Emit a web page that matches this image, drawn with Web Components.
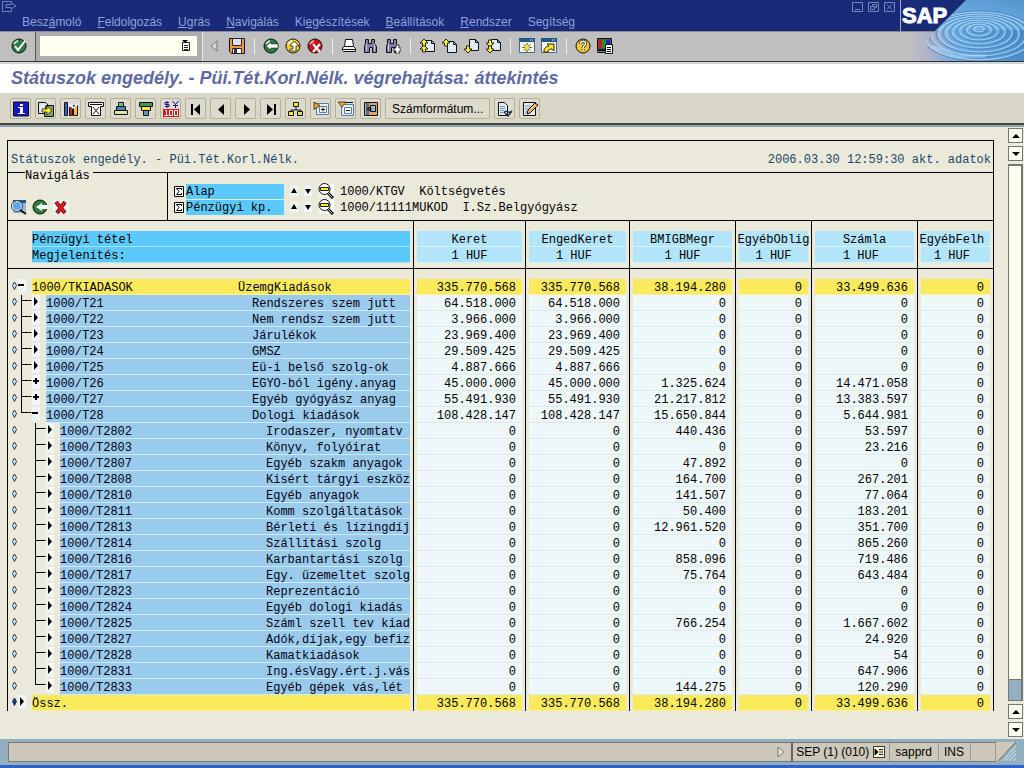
<!DOCTYPE html>
<html lang="hu">
<head>
<meta charset="utf-8">
<title>Státuszok engedély. - Püi.Tét.Korl.Nélk. végrehajtása: áttekintés</title>
<style>
body{margin:0;background:#ebe9da;font:12px/16px "Liberation Sans",Arial,sans-serif;color:#000}
</style>
</head>
<body>
<sap-window></sap-window>
<script>
const RESET = `*{box-sizing:border-box}button{font:inherit;color:inherit;background:none;border:0;padding:0;margin:0}`;

const circle = (c, d) => `<circle cx="8" cy="8" r="7" fill="${c}" stroke="#111" stroke-width="1"/><path d="M3 6a6 6 0 0 1 4-3" stroke="${d}" stroke-width="2" fill="none"/>`;
const page = (x, y) => `<path d="M${x} ${y}h6l3 3v8h-9z" fill="#dfeaf2" stroke="#111"/><path d="M${x + 6} ${y}v3h3" fill="none" stroke="#111"/>`;
const binoc = `<path d="M2.500 1.500h3v4h3v-4h3v4l2 3v6h-4v-5h-3v5h-5v-6l1-3z" fill="#7f7da4" stroke="#111"/><path d="M3.500 6v7M11.500 6v7" stroke="#c9c8e2" fill="none"/>`;
const upArrow = (x, y) => `<path d="M${x} ${y}l4 4h-2.500v3h-3v-3h-2.500z" fill="#ffee22" stroke="#222" stroke-width="1"/>`;
const downArrow = (x, y) => `<path d="M${x} ${y}l-4-4h2.500v-3h3v3h2.500z" fill="#ffee22" stroke="#222" stroke-width="1"/>`;
const win = `<path d="M0.500 0.500h15v14h-15z" fill="#f8f8ee" stroke="#456b8c"/><path d="M0 0h16v4h-16z" fill="#245886"/><path d="M11 2h1M13 2h1" stroke="#fff"/>`;
const ICONS = {
  ok: circle('#2c7a45', '#bfe0c0') + `<path d="M4 8l3 4 7-9" fill="none" stroke="#fff" stroke-width="2"/>`,
  save: `<path d="M.5 .5h15v15h-13l-2-2z" fill="#f09a3a" stroke="#111"/><path d="M3.500 .5h9v7h-9z" fill="#dfe2f4" stroke="#223"/><path d="M3.500 10.500h9v5h-9z" fill="#fff" stroke="#223"/><path d="M5 11h3v4h-3z" fill="#334"/>`,
  back: circle('#2c7a45', '#bfe0c0') + `<path d="M3 8l5-4v2h7v4h-7v2z" fill="#fff" stroke="#111" stroke-width=".5"/>`,
  exit: circle('#f5d21f', '#fffbd0') + `<path d="M9 3l5 5h-3v5h-6v-2h3v-3h-3z" fill="#fff" stroke="#222" stroke-width=".8"/>`,
  cancel: circle('#c8141c', '#f7a0a0') + `<path d="M6 6l7 8M13 6l-7 8" stroke="#fff" stroke-width="2"/>`,
  print: `<path d="M4.500 1.500h7l1 7h-9z" fill="#fff" stroke="#111"/><path d="M3.500 8.500h9l2 2v3h-12l-1-1v-3z" fill="#f6f4e4" stroke="#111"/><path d="M2 11.500h12" stroke="#111"/>`,
  find: binoc,
  findnext: binoc + `<path d="M11 7h3v3h2v3h-2v3h-3v-3h-2v-3h2z" fill="#fff" stroke="#111" stroke-width=".8"/>`,
  first: page(6.5, 2.5) + upArrow(5, 7) + upArrow(5, 1),
  prev: page(6.5, 3.500) + upArrow(5, 1),
  next: page(6.5, 1.500) + downArrow(5, 15),
  last: page(6.5, 1.500) + downArrow(5, 9) + downArrow(5, 15),
  newwin: win + `<path d="M3.500 9.500h9M8 5v9M5 6.500l6 6M11 6.500l-6 6" stroke="#333"/><path d="M8 7v5M5.500 9.500h5" stroke="#ffe81c" stroke-width="2"/>`,
  shortcut: win + `<path d="M3 14c0-4 1-5 5-6l-2-2h7v7l-2-2c-3 0-4 1-4 3z" fill="#ffe81c" stroke="#222"/>`,
  help: `<circle cx="8" cy="8" r="7" fill="#f7c92c" stroke="#111"/><path d="M5.500 6c0-4 5.500-3.500 5 0 0 2-2.500 1.500-2.500 4M8 11v2" fill="none" stroke="#222" stroke-width="3"/><path d="M5.500 6c0-4 5.500-3.500 5 0 0 2-2.500 1.500-2.500 4M8 11v2" fill="none" stroke="#fff" stroke-width="1.500"/>`,
  layout: `<path d="M.5 .5h14v11h-14z" fill="#555" stroke="#111"/><path d="M2 2h3v8h-3z" fill="#d11"/><path d="M5 2h4v8h-4z" fill="#1a9a2a"/><path d="M9 2h4v8h-4z" fill="#22c"/><path d="M.5 12.500h9v2h-9z" fill="#3a6" stroke="#111"/><path d="M8.500 6.500h7v9h-7z" fill="#fff" stroke="#111"/><path d="M10 9.500h4M10 11.500h4M10 13.500h4" stroke="#111"/>`,
  info: `<path d="M.5 1h15v14h-15z" fill="#1818c8" stroke="#111"/><path d="M7 3h3v2h-3zM5 6h5v6h2v1h-7v-1h2v-5h-2z" fill="#fff"/>`,
  export: `<path d="M.5 1.500h7l3 3v8h-10z" fill="#dfeaf2" stroke="#111"/><path d="M8 4.500h7.500v11h-9v-3z" fill="#78a070" stroke="#111"/><path d="M4 8h5v-3l5 4.500-5 4.500v-3h-5z" fill="#ffef25" stroke="#222" stroke-width=".8"/>`,
  chart: `<path d="M0 1h16v14h-16z" fill="#d8dde8"/><path d="M1.500 1.500h3v13h-3z" fill="#36c" stroke="#111"/><path d="M6.500 6.500h3v8h-3z" fill="#c22" stroke="#111"/><path d="M10.500 4.500h4v10h-4z" fill="#fb4" stroke="#111"/><path d="M6 3l4 4 5-4" stroke="#fff" fill="none" stroke-width="1.500"/>`,
  fold: `<path d="M.5 1.500h15v4h-3v9h-9v-9h-3z" fill="#fff" stroke="#111"/><path d="M2 3.500h12M5 6l6 7M11 6l-6 7" stroke="#111"/>`,
  sortup: `<path d="M5.500 1.500h5v4h-5z" fill="#79c28c" stroke="#111"/><path d="M3.500 5.500h9v4h-9z" fill="#4a83b8" stroke="#111"/><path d="M1.500 9.500h13v4h-13z" fill="#d3e8a0" stroke="#111"/>`,
  sortdown: `<path d="M1.500 1.500h13v4h-13z" fill="#4a9368" stroke="#111"/><path d="M3.500 5.500h9v4h-9z" fill="#ffe42c" stroke="#111"/><path d="M5.500 9.500h5v5h-5z" fill="#6292bf" stroke="#111"/>`,
  currency: `<path d="M6 1.500h-4v2h4v2h-4M4 0v7M9.500 0l3 3.500 3-3.500M12.500 3v4M10 4.500h5" fill="none" stroke="#14149c"/><path d="M0 8h16v8h-16z" fill="#d4181c"/><path d="M2 9.500h1.500v4.500M1.500 14.500h4M6.500 9.500h3v5h-3zM11.500 9.500h3v5h-3z" fill="none" stroke="#fff"/>`,
  gofirst: `<path d="M3 3h2v11h-2zM12 3v11l-6-5.500z" fill="#000"/>`,
  goprev: `<path d="M11 3v11l-6-5.500z" fill="#000"/>`,
  gonext: `<path d="M6 3v11l6-5.500z" fill="#000"/>`,
  golast: `<path d="M4 3v11l6-5.500zM11 3h2v11h-2z" fill="#000"/>`,
  org: `<path d="M8 5v4M3 12v-3h10v3" stroke="#111" fill="none"/><path d="M5.500 1.500h5v4h-5z" fill="#ffe81c" stroke="#111"/><path d="M.5 10.500h5v4h-5z" fill="#ffe81c" stroke="#111"/><path d="M9.500 10.500h5v4h-5z" fill="#d8d880" stroke="#111"/>`,
  expand: `<path d="M3.500 2.500h12v11h-12z" fill="#e9eff8" stroke="#557aa4"/><path d="M6.500 5.500h7v6h-7z" fill="#fff" stroke="#557aa4"/><path d="M8 8.500h4M10 6.500v4" stroke="#111"/><path d="M1 1l6 3.500-6 4z" fill="#f9a51c" stroke="#111" stroke-width=".7"/>`,
  collapse: `<path d="M3.500 3.500h12v11h-12z" fill="#e9eff8" stroke="#557aa4"/><path d="M6.500 6.500h7v6h-7z" fill="#fff" stroke="#557aa4"/><path d="M8 9.500h4M3 1.500h12" stroke="#111"/><path d="M0 1h8l-4 5z" fill="#f9a51c" stroke="#111" stroke-width=".7"/>`,
  drill: `<path d="M1.500 1.500h13v13h-13z" fill="#e2a35c" stroke="#111"/><path d="M3 2h3v12h-3z" fill="#4672a8"/><path d="M7.500 4.500h5v6h-5z" fill="#93b7dc" stroke="#111"/><path d="M4 8h5M7 6l-3 2 3 2" fill="none" stroke="#111"/>`,
  display: `<path d="M1.500 1.500h6l3 3v10h-9z" fill="#dfeaf2" stroke="#111"/><path d="M3 5.500h5M3 7.500h5M3 9.500h4M3 11.500h3" stroke="#7798ad"/><path d="M7 12c2-5 4 2 8-2M8 12l3 3 4-5" fill="none" stroke="#234" stroke-width="1.500"/>`,
  edit: `<path d="M1.500 1.500h12v13h-12z" fill="#dfeaf2" stroke="#111"/><path d="M3 5h6M3 8h4M3 11h3" stroke="#7798ad"/><path d="M5 13l1-4 7-7 3 2-8 8z" fill="#f3b65c" stroke="#111"/>`,
  detail: `<path d="M2 1h13v13h-13z" fill="#9cb8d8"/><path d="M2 1h13v3h-13z" fill="#245886"/><circle cx="6" cy="7" r="4.500" fill="#5ba6ea" stroke="#eef"/><circle cx="6" cy="7" r="5.500" fill="none" stroke="#445"/><path d="M9 11l6 4" stroke="#111" stroke-width="2"/>`,
  undo: `<circle cx="8" cy="8" r="7" fill="#2f7d3c" stroke="#111"/><path d="M4 8l6-4v2h6v4h-6v2z" fill="#fff"/>`,
  del: `<path d="M0 1h16v15h-16z" fill="#eef4f2"/><path d="M3 3l9 11M12 3l-8 11" stroke="#611" stroke-width="4"/><path d="M3 3l9 11M12 3l-8 11" stroke="#e01828" stroke-width="2.500"/>`,
  zoom: `<path d="M1 1h15v14h-15z" fill="#f6f8f4"/><circle cx="6.500" cy="6" r="5.500" fill="#fff" stroke="#111"/><path d="M2.500 4.500h8v3h-8z" fill="#fff01c" stroke="#222"/><path d="M10 10l5 5" stroke="#111" stroke-width="3"/><path d="M10 10l4 4" stroke="#bbb"/>`,
  sum: `<path d="M.5.5h9v10h-9z" fill="#fff" stroke="#000"/><path d="M7.500 4v-1.500h-5l2.500 3-2.500 3h5v-1.500" fill="none" stroke="#000"/>`,
  up: `<path d="M0 0h8v10h-8z" fill="#f1f6f5"/><path d="M4 2l3 5h-6z"/>`,
  down: `<path d="M0 0h8v10h-8z" fill="#f1f6f5"/><path d="M4 8l3-5h-6z"/>`,
  history: `<path d="M1.500 2.500h7v8h-7z" fill="#fff" stroke="#222"/><path d="M3 5.500h4M3 7.500h4M3 9.500h4" stroke="#222"/><path d="M1 0h6l-3 3z"/>`,
  menu: `<path d="M9.500 2.500v-2h-9v10h9v-2M4 3.500h5v-1.500l5 3-5 3v-1.500h-5z" fill="none" stroke="#6d80bd"/>`,
  min: `<path d="M.5.5h10v9h-10zM3 7.500h5" fill="none" stroke="#7487bf"/>`,
  restore: `<path d="M.5.5h10v9h-10zM4.500 4v-1.500h4v3h-2M2.500 4.500h4v3h-4z" fill="none" stroke="#7487bf"/>`,
  close: `<path d="M.5.5h10v9h-10zM3 2.500l5 5M8 2.500l-5 5" fill="none" stroke="#7487bf"/>`,
  tri: `<path d="M7 1v10l-6-5z" fill="#d8d8d8" stroke="#777"/>`,
  msg: `<path d="M1 1v10l6-5z" fill="#e7e4d4" stroke="#777"/>`,
  sys: `<path d="M.5.5h11v11h-11z" fill="#fffbd8" stroke="#333"/><path d="M2 3l3 3-3 3zM6 3.500h4M6 6h4M6 8.500h4" stroke="#111"/>`,
};
const SIZES = {sum:[10,11],up:[8,10],down:[8,10],history:[10,12],menu:[15,11],min:[11,10],restore:[11,10],close:[11,10],tri:[8,12],msg:[8,12],sys:[12,12]};

customElements.define('sap-icon', class extends HTMLElement {
  connectedCallback() {
    const n = this.getAttribute('name'), [w, h] = SIZES[n] || [16, 16];
    this.attachShadow({mode: 'open'}).innerHTML =
      `<style>:host{display:block;flex:none;width:${w}px;height:${h}px}svg{display:block}</style><svg width="${w}" height="${h}" viewBox="0 0 ${w} ${h}" aria-hidden="true">${ICONS[n]}</svg>`;
  }
});

customElements.define('icon-button', class extends HTMLElement {
  connectedCallback() {
    const n = this.getAttribute('name'), framed = this.hasAttribute('framed');
    this.attachShadow({mode: 'open'}).innerHTML = `<style>${RESET}
      :host{display:block;flex:none;white-space:normal}
      button{display:flex;align-items:center;justify-content:center}
      .framed{height:21px;min-width:21px;border:1px solid #b3b09c;border-radius:2px;background:#dddbcb;padding:0 1px}
      .framed:has(slot.text){padding:0 6px}</style>
      <button type="button" class="${framed ? 'framed' : ''}" ${n ? `aria-label="${n}"` : ''}>${n ? `<sap-icon name="${n}"></sap-icon>` : '<slot class="text"></slot>'}</button>`;
  }
});

customElements.define('menu-bar', class extends HTMLElement {
  connectedCallback() {
    const items = ['Besz<u>á</u>moló','<u>F</u>eldolgozás','<u>U</u>grás','<u>N</u>avigálás','Ki<u>e</u>gészítések','<u>B</u>eállítások','<u>R</u>endszer','Se<u>g</u>ítség'];
    this.attachShadow({mode: 'open'}).innerHTML = `<style>${RESET}
      :host{display:flex;justify-content:space-between;height:32px;background:#192a78;border-bottom:1px solid #8a8a90;color:#8fa2dc;padding:1px 5px 0 2px;box-sizing:border-box}
      nav{display:flex;gap:16px;padding:12px 0 0 5px}
      .left{display:flex}.ctl{display:flex;gap:5px;padding-top:1px}</style>
      <div class="left"><icon-button name="menu"></icon-button><nav>${items.map(i => `<button type="button">${i}</button>`).join('')}</nav></div>
      <div class="ctl"><icon-button name="min"></icon-button><icon-button name="restore"></icon-button><icon-button name="close"></icon-button></div>`;
  }
});

customElements.define('system-toolbar', class extends HTMLElement {
  connectedCallback() {
    const groups = [['save'],['back','exit','cancel'],['print','find','findnext'],['first','prev','next','last'],['newwin','shortcut'],['help','layout']];
    this.attachShadow({mode: 'open'}).innerHTML = `<style>${RESET}
      :host{display:flex;height:30px;background:#bfbfbf;border-bottom:1px solid #333;box-sizing:border-box}
      .ok{width:36px;padding:6px 0 0 11px;border-right:1px solid #555}
      .cmd{display:flex;flex:none;width:167px;padding:4px 5px 5px 4px;border-right:1px solid #e8e8e8;background:#adadad}
      .field{display:flex;align-items:center;flex:1;min-width:0;background:#fffff0;padding-right:6px}
      input{flex:1;min-width:0;width:100%;border:0;background:none;outline:0;font:inherit;height:19px}
      .tri{padding:8px 11px 0 7px}
      .groups{display:flex;padding-top:6px}
      .g{display:flex;gap:6px;padding:0 9px 0 8px;border-left:1px solid #eee;height:16px}
      .g:first-child{border:0;padding-left:0}</style>
      <div class="ok"><icon-button name="ok"></icon-button></div>
      <div class="cmd"><div class="field"><input type="text" aria-label="Parancsmező"><icon-button name="history"></icon-button></div></div>
      <div class="tri"><icon-button name="tri"></icon-button></div>
      <div class="groups">${groups.map(g => `<div class="g">${g.map(n => `<icon-button name="${n}"></icon-button>`).join('')}</div>`).join('')}</div>`;
  }
});

customElements.define('sap-logo', class extends HTMLElement {
  connectedCallback() {
    let rings = '';
    for (let i = 1; i < 9; i++) rings += `<ellipse cx="79" cy="${28 + i}" rx="${i * 7 - 2}" ry="${i * 3}" fill="none" stroke="#a9d8f8" stroke-width="1.500" opacity=".75"/><ellipse cx="79" cy="${28 + i}" rx="${i * 7 + 1}" ry="${i * 3 + 1}" fill="none" stroke="#3877b8" opacity=".6"/>`;
    this.attachShadow({mode: 'open'}).innerHTML = `<style>
      :host{display:block;flex:none;width:124px;height:62px}svg{display:block}
      text{font:bold 22px "Liberation Sans",Arial,sans-serif;fill:#fff;stroke:#fff;stroke-width:1px}</style>
      <svg width="124" height="62" viewBox="0 0 124 62">
      <defs><linearGradient id="w"><stop offset="0" stop-color="#bfbfbf"/><stop offset=".2" stop-color="#aab0cb"/><stop offset=".4" stop-color="#6caade"/><stop offset="1" stop-color="#4a8cc8"/></linearGradient>
      <linearGradient id="n" x1="0" y1="0" x2="0" y2="1"><stop offset="0" stop-color="#5b9cd2"/><stop offset="1" stop-color="#7dbcec"/></linearGradient>
      <clipPath id="c"><path d="M66 0h58v61H30l-4-20 10-10z"/></clipPath></defs>
      <path d="M0 0h124v61H0z" fill="#bfbfbf"/>
      <path d="M10 0h114v61H10z" fill="url(#w)"/>
      <path d="M66 0h58v30H36z" fill="url(#n)" opacity=".6"/>
      <g clip-path="url(#c)">${rings}<path d="M32 46l24 10h30" stroke="#c4edff" stroke-width="3" opacity=".4" fill="none"/></g>
      <path d="M0 0h66l-31 31H0z" fill="#192a78"/><path d="M0 31.500h35" stroke="#8a8a90"/>
      <path d="M.5 0v31" stroke="#aab"/>
      <text x="2" y="23">SAP</text>
      <path d="M0 61.500h124" stroke="#333"/></svg>`;
  }
});

customElements.define('app-toolbar', class extends HTMLElement {
  connectedCallback() {
    const a = ['info','export','chart','fold','sortup','sortdown','currency','gofirst','goprev','gonext','golast','org','expand','collapse','drill'];
    const b = n => `<icon-button framed name="${n}"></icon-button>`;
    this.attachShadow({mode: 'open'}).innerHTML = `<style>
      :host{display:flex;gap:4px;padding:4px 10px;height:33px;box-sizing:border-box;background:#d9d7c7;border-bottom:2px solid #8fa0ac;box-shadow:inset 0 -2px #444}</style>
      ${a.map(b).join('')}<icon-button framed>Számformátum...</icon-button>${['display','edit'].map(b).join('')}`;
  }
});

const COLS = [['Keret','1 HUF'],['EngedKeret','1 HUF '],['BMIGBMegr','1 HUF'],['EgyébOblig','1 HUF'],['Számla','1 HUF '],['EgyébFelh ','1 HUF ']];
const Z = '0';
const ROWS = [
 [0,'-','1000/TKIADASOK','ÜzemgKiadások','335.770.568','335.770.568','38.194.280',Z,'33.499.636',Z],
 [1,'>','1000/T21','Rendszeres szem jutt','64.518.000','64.518.000',Z,Z,Z,Z],
 [1,'>','1000/T22','Nem rendsz szem jutt','3.966.000','3.966.000',Z,Z,Z,Z],
 [1,'>','1000/T23','Járulékok','23.969.400','23.969.400',Z,Z,Z,Z],
 [1,'>','1000/T24','GMSZ','29.509.425','29.509.425',Z,Z,Z,Z],
 [1,'>','1000/T25','Eü-i belső szolg-ok','4.887.666','4.887.666',Z,Z,Z,Z],
 [1,'+','1000/T26','EGYO-ból igény.anyag','45.000.000','45.000.000','1.325.624',Z,'14.471.058',Z],
 [1,'+','1000/T27','Egyéb gyógyász anyag','55.491.930','55.491.930','21.217.812',Z,'13.383.597',Z],
 [1,'-','1000/T28','Dologi kiadások','108.428.147','108.428.147','15.650.844',Z,'5.644.981',Z],
 [2,'>','1000/T2802','Irodaszer, nyomtatv',Z,Z,'440.436',Z,'53.597',Z],
 [2,'>','1000/T2803','Könyv, folyóirat',Z,Z,Z,Z,'23.216',Z],
 [2,'>','1000/T2807','Egyéb szakm anyagok',Z,Z,'47.892',Z,Z,Z],
 [2,'>','1000/T2808','Kisért tárgyi eszköz',Z,Z,'164.700',Z,'267.201',Z],
 [2,'>','1000/T2810','Egyéb anyagok',Z,Z,'141.507',Z,'77.064',Z],
 [2,'>','1000/T2811','Komm szolgáltatások',Z,Z,'50.400',Z,'183.201',Z],
 [2,'>','1000/T2813','Bérleti és lízingdíj',Z,Z,'12.961.520',Z,'351.700',Z],
 [2,'>','1000/T2814','Szállítási szolg',Z,Z,Z,Z,'865.260',Z],
 [2,'>','1000/T2816','Karbantartási szolg',Z,Z,'858.096',Z,'719.486',Z],
 [2,'>','1000/T2817','Egy. üzemeltet szolg',Z,Z,'75.764',Z,'643.484',Z],
 [2,'>','1000/T2823','Reprezentáció',Z,Z,Z,Z,Z,Z],
 [2,'>','1000/T2824','Egyéb dologi kiadás',Z,Z,Z,Z,Z,Z],
 [2,'>','1000/T2825','Száml szell tev kiad',Z,Z,'766.254',Z,'1.667.602',Z],
 [2,'>','1000/T2827','Adók,díjak,egy befiz',Z,Z,Z,Z,'24.920',Z],
 [2,'>','1000/T2828','Kamatkiadások',Z,Z,Z,Z,'54',Z],
 [2,'>','1000/T2831','Ing.ésVagy.ért.j.vás',Z,Z,Z,Z,'647.906',Z],
 [2,'>','1000/T2833','Egyéb gépek vás,lét',Z,Z,'144.275',Z,'120.290',Z],
 [0,'>','Össz.','','335.770.568','335.770.568','38.194.280',Z,'33.499.636',Z],
];

function treeGlyph(level, mark, last, total) {
  const w = 24 + level * 14, m = 10 + level * 14;
  let s = `<path d="M6.500 3l2 3.500-2 4-2-4z" fill="${total ? '#123a70' : 'none'}" stroke="#123a70"/>`;
  if (level) s += `<path d="M${m - 10.5} 0V${last ? 6 : 16}M${m - 10.5} 5.500h10" fill="none" stroke="#000"/>`;
  s += `<path d="M${m} 0h8v14h-8z" fill="#eff7f8"/>`;
  if (mark === '>') s += `<path d="M${m + 2} 2v9l4-4.500z"/>`;
  if (mark === '+') s += `<path d="M${m + 1} 5h6v2h-6zM${m + 3} 3h2v6h-2z"/>`;
  if (mark === '-') s += `<path d="M${m} 5h6v2h-6z"/>`;
  return `<svg width="${w}" height="16" viewBox="0 0 ${w} 16" aria-hidden="true">${s}</svg>`;
}

customElements.define('report-grid', class extends HTMLElement {
  connectedCallback() {
    const body = ROWS.map((r, i) => {
      const [lv, mk, key, txt, ...v] = r, next = ROWS[i + 1];
      const last = lv > 0 && (!next || (lv === 1 ? next[0] !== 1 : next[0] < lv));
      return `<tr class="${lv ? '' : 'tot'}"><td><div class="node">${treeGlyph(lv, mk, last, i === ROWS.length - 1)}<div class="fill key"><span>${key}</span><span>${txt}</span></div></div></td>${v.map(x => `<td><div class="fill num">${x}</div></td>`).join('')}</tr>`;
    }).join('');
    const dim = (k, v) => `<div class="dim"><sap-icon name="sum"></sap-icon><span class="k">${k}</span><icon-button name="up"></icon-button><icon-button name="down"></icon-button><icon-button name="zoom"></icon-button><span class="v">${v}</span></div>`;
    this.attachShadow({mode: 'open'}).innerHTML = `<style>${RESET}
      :host{display:block;flex:1;min-width:0;font:12px/18px "Liberation Mono","Courier New",monospace;white-space:pre}
      .head{display:flex;justify-content:space-between;border:1px solid #000;padding:10px 2px 3px 3px;color:#24466a}
      .nav{display:flex;border:solid #000;border-width:0 1px 1px;height:48px}
      .acts{position:relative;display:flex;gap:5px;width:160px;border-right:1px solid #000;padding:26px 0 0 3px}
      .legend{position:absolute;left:17px;top:-4px;width:68px;line-height:14px;background:#ebe9da}
      .dims{padding:10px 0 0 6px}
      .dim{display:flex;align-items:center;height:16px}
      .dim .k{width:98px;height:15px;line-height:16px;background:#5cc9fd;margin:0 6px 0 2px}
      .dim .v{height:16px}
      .dim icon-button{margin-right:6px}
      table{width:100%;table-layout:fixed;border-spacing:0;border-left:1px solid #000}
      th,td{padding:0 3px;border-right:1px solid #000;font-weight:normal;text-align:left}
      th{padding:10px 3px 5px;border-bottom:1px solid #000}
      td:first-child{padding-left:0}th:first-child{padding-left:24px}
      th div{display:flex;justify-content:center;height:16px;background:#b2e5fb;border-bottom:1px solid #d6f2fc}
      th:first-child div{justify-content:flex-start;background:#5cc9fd;border-bottom-color:#a5e4fd}
      tbody tr:first-child td{padding-top:10px}
      .node{display:flex;height:16px}svg{display:block;flex:none}
      .fill{height:16px;background:#eef7fa;border-bottom:1px solid #dcebe9}
      .num{text-align:right;padding-right:6px}
      .key{display:flex;flex:1;min-width:0;background:#9bcbec;border-bottom-color:#cdeaf8;color:#001}
      .key span:first-child{flex:0 0 206px}
      .tot .fill{background:#fbeb5c;border-bottom-color:#fbf0a0}</style>
      <div class="head"><span>Státuszok engedély. - Püi.Tét.Korl.Nélk.</span><span>2006.03.30 12:59:30 akt. adatok</span></div>
      <div class="nav"><div class="acts"><span class="legend">Navigálás</span><icon-button name="detail"></icon-button><icon-button name="undo"></icon-button><icon-button name="del"></icon-button></div>
      <div class="dims">${dim('Alap', '1000/KTGV  Költségvetés')}${dim('Pénzügyi kp.', '1000/11111MUKOD  I.Sz.Belgyógyász')}</div></div>
      <table><colgroup><col>${[112,104,106,76,106,76].map(w => `<col style="width:${w}px">`).join('')}</colgroup>
      <thead><tr><th><div>Pénzügyi tétel</div><div>Megjelenítés:</div></th>${COLS.map(c => `<th><div>${c[0]}</div><div>${c[1]}</div></th>`).join('')}</tr></thead>
      <tbody>${body}</tbody></table>`.replace(/>\n\s+</g, '><');
  }
});

customElements.define('scroll-rail', class extends HTMLElement {
  connectedCallback() {
    const b = (d, l) => `<button type="button" aria-label="${l}"><svg width="8" height="4" viewBox="0 0 8 4"><path d="${d}"/></svg></button>`;
    const up = b('M0 4l4-4 4 4z', 'Fel'), dn = b('M0 0l4 4 4-4z', 'Le');
    this.attachShadow({mode: 'open'}).innerHTML = `<style>${RESET}
      :host{display:flex;flex-direction:column;gap:3px;width:15px;flex:none}
      button{height:15px;display:flex;align-items:center;justify-content:center;background:#fbfbf0;border:1px solid #777}
      .track{flex:1;display:flex;flex-direction:column;justify-content:flex-end;background:#fffff0;border:2px solid #777;border-width:2px 2px 1px 1px}
      .thumb{height:21px;background:#92afc4;border-top:1px solid #777}</style>
      ${up}${dn}<div class="track"><div class="thumb"></div></div>${up}${dn}`;
  }
});

customElements.define('status-bar', class extends HTMLElement {
  connectedCallback() {
    this.attachShadow({mode: 'open'}).innerHTML = `<style>${RESET}
      :host{display:flex;height:29px;padding:3px 7px 3px 8px;background:#91afc0;border-bottom:3px solid #2f62c8;box-sizing:border-box}
      .msg{flex:1;display:flex;justify-content:flex-end;align-items:center;background:#cdc8b9;border:1px solid #777;border-right:0;height:20px;padding-right:6px}
      .cells{display:flex;height:20px;background:#cdc8b9;border:1px solid #777;border-left:2px solid #666;border-right:0}
      .cells>div{display:flex;align-items:center;gap:4px;padding:0 6px 0 5px;border-right:1px solid #999;line-height:18px}
      .cells>div:first-child{padding:0 4px 0 3px}
      .cells>.blank{width:25px}
      svg{display:block}</style>
      <div class="msg"><icon-button name="msg"></icon-button></div>
      <div class="cells"><div>SEP (1) (010)<icon-button name="sys"></icon-button></div><div>sapprd</div><div>INS</div><div class="blank"></div></div>
      <svg width="21" height="20" viewBox="0 0 21 20"><path d="M0 0h20L2 19.500H0z" fill="#cdc8b9"/><path d="M20 0L2 19" stroke="#666"/><path d="M20 4L7 19M20 8l-10 11M20 12l-7 7M20 16l-3 3" stroke="#dfe8ec"/></svg>`;
  }
});

customElements.define('sap-window', class extends HTMLElement {
  connectedCallback() {
    this.attachShadow({mode: 'open'}).innerHTML = `<style>${RESET}
      :host{display:flex;flex-direction:column;min-height:100vh}
      header{display:flex}header>div{flex:1;min-width:0}
      h1{margin:0;height:32px;font:italic bold 18px/32px "Liberation Sans",Arial,sans-serif;color:#5e6ba2;background:#fff;padding-left:11px;border-bottom:1px solid #d9d7c7;box-shadow:inset 0 2px #d4d4d4}
      main{flex:1;display:flex;gap:14px;padding:0 1px 0 7px}
      report-grid{margin:13px 0 28px}scroll-rail{margin:1px 0 2px}</style>
      <header><div><menu-bar></menu-bar><system-toolbar></system-toolbar></div><sap-logo></sap-logo></header>
      <h1>Státuszok engedély. - Püi.Tét.Korl.Nélk. végrehajtása: áttekintés</h1>
      <app-toolbar></app-toolbar>
      <main><report-grid></report-grid><scroll-rail></scroll-rail></main>
      <status-bar></status-bar>`;
  }
});
</script>
</body>
</html>
